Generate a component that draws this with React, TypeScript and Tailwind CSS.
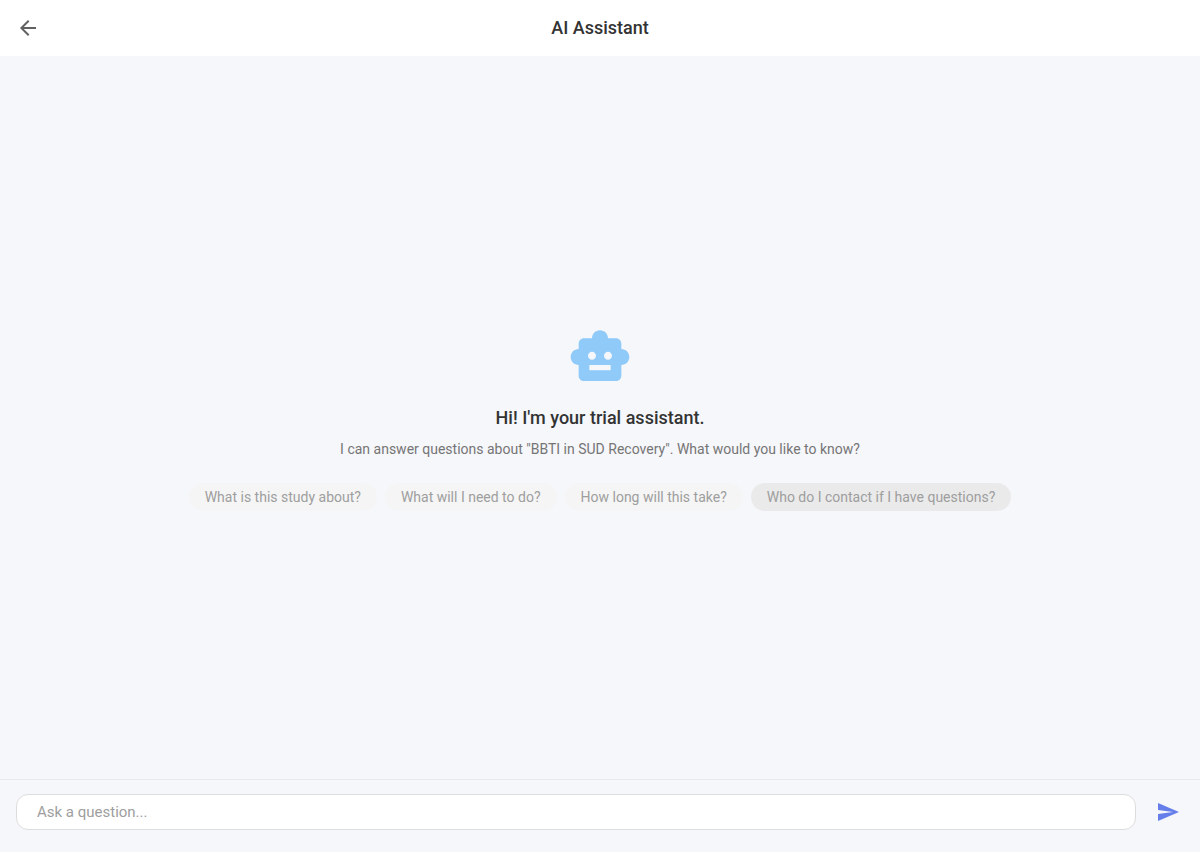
import { useState } from "react";
import { MdArrowBack, MdSend, MdSmartToy } from "react-icons/md";

const suggestions = [
  { id: "about", label: "What is this study about?" },
  { id: "todo", label: "What will I need to do?" },
  { id: "duration", label: "How long will this take?" },
  { id: "contact", label: "Who do I contact if I have questions?", active: true },
];

export default function App() {
  const [question, setQuestion] = useState("");

  return (
    <div className="flex min-h-screen flex-col bg-[#f5f7fb] font-[Roboto,sans-serif]">
      {/* App bar */}
      <header className="grid h-14 grid-cols-[56px_1fr_56px] items-center bg-white">
        <button type="button" aria-label="Back" className="flex h-14 items-center justify-center text-[#616161]">
          <MdArrowBack className="size-6" />
        </button>
        <h1 className="text-center text-lg font-medium text-[#333333]">AI Assistant</h1>
      </header>

      {/* Empty conversation */}
      <main className="flex flex-1 flex-col items-center justify-center px-6 text-center">
        <MdSmartToy className="size-16 text-[#90caf9]" />
        <h2 className="mt-4 text-lg leading-[26px] font-medium text-[#333333]">Hi! I'm your trial assistant.</h2>
        <p className="mt-2 text-sm leading-5 text-[#757575]">
          I can answer questions about "BBTI in SUD Recovery". What would you like to know?
        </p>
        <div className="mt-6 flex flex-wrap justify-center gap-2">
          {suggestions.map(s => (
            <button
              key={s.id}
              type="button"
              onClick={() => setQuestion(s.label)}
              className={`h-7 rounded-full px-4 text-sm text-[#9e9e9e] ${s.active ? "bg-[#eaeaea]" : "bg-[#f5f5f5]"}`}
            >
              {s.label}
            </button>
          ))}
        </div>
      </main>

      {/* Composer */}
      <form
        onSubmit={e => e.preventDefault()}
        className="flex items-center gap-2 border-t border-[#e8e9ed] pt-2 pr-2 pb-4 pl-4"
      >
        <input
          type="text"
          aria-label="Ask a question"
          placeholder="Ask a question..."
          value={question}
          onChange={e => setQuestion(e.target.value)}
          className="h-9 min-w-0 flex-1 rounded-xl border border-[#dddddd] bg-white px-5 text-[15px] text-[#333333] outline-none placeholder:text-[#9e9e9e]"
        />
        <button type="submit" aria-label="Send" className="flex size-12 items-center justify-center text-[#667eea]">
          <MdSend className="size-6" />
        </button>
      </form>
    </div>
  );
}
